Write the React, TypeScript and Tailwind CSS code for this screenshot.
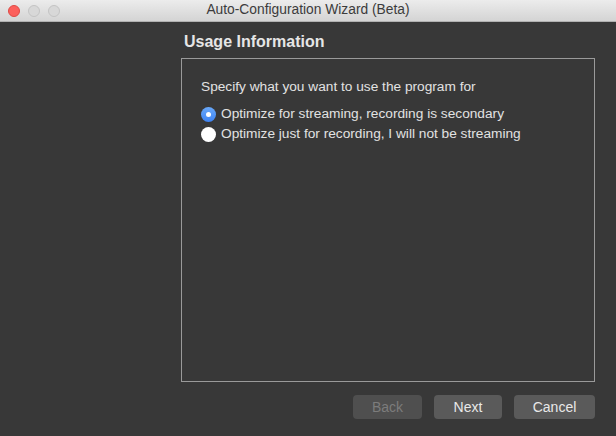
import React, { useState } from 'react';

const font = { fontFamily: '"Liberation Sans", Arial, sans-serif' };

const App: React.FC = () => {
  const [mode, setMode] = useState<'stream' | 'record'>('stream');

  const options = [
    { key: 'stream' as const, label: 'Optimize for streaming, recording is secondary' },
    { key: 'record' as const, label: 'Optimize just for recording, I will not be streaming' },
  ];

  return (
    <div className="w-[616px] h-[436px] flex flex-col bg-[#383838] overflow-hidden" style={font}>
      {/* barre de titre */}
      <div className="h-[22px] shrink-0 flex items-center relative bg-gradient-to-b from-[#ececec] to-[#d4d4d4] border-b border-[#b1b1b1]">
        <div className="flex items-center gap-[8px] pl-[8px]">
          <span className="w-[12px] h-[12px] rounded-full bg-[#fc605c] border border-[#de4a45]" />
          <span className="w-[12px] h-[12px] rounded-full bg-[#d8d8d8] border border-[#c4c4c4]" />
          <span className="w-[12px] h-[12px] rounded-full bg-[#d8d8d8] border border-[#c4c4c4]" />
        </div>
        <div className="flex-1 text-center text-[13.8px] text-[#3c3c3c] pr-[68px] pl-[8px]">
          Auto-Configuration Wizard (Beta)
        </div>
      </div>

      {/* contenu */}
      <div className="flex-1 flex flex-col pl-[181px] pr-[21px] pt-[10px]">
        <h2 className="text-[16px] font-bold text-[#e6e6e6] pl-[3px] leading-[20px]">Usage Information</h2>
        <div className="mt-[6px] h-[324px] border border-[#9a9a9a] px-[19px] pt-[19px]">
          <p className="text-[13.7px] text-[#e2e2e2] leading-[18px]">Specify what you want to use the program for</p>
          <div className="mt-[9px] flex flex-col gap-[2px]">
            {options.map((o) => (
              <label key={o.key} className="flex items-center gap-[5px] cursor-pointer h-[18px]" onClick={() => setMode(o.key)}>
                {mode === o.key ? (
                  <span className="w-[15px] h-[15px] rounded-full bg-gradient-to-b from-[#69a8f9] to-[#3e83f3] flex items-center justify-center">
                    <span className="w-[5px] h-[5px] rounded-full bg-white" />
                  </span>
                ) : (
                  <span className="w-[15px] h-[15px] rounded-full bg-white" />
                )}
                <span className="text-[13.7px] text-[#e2e2e2]">{o.label}</span>
              </label>
            ))}
          </div>
        </div>

        <div className="mt-[13px] flex justify-end gap-[12px]">
          <button className="w-[69px] h-[24px] rounded-[4px] bg-[#4f4f4f] text-[14px] text-[#7c7c7c]" disabled>
            Back
          </button>
          <button className="w-[68px] h-[24px] rounded-[4px] bg-[#5a5a5a] text-[14px] text-[#e8e8e8]">
            Next
          </button>
          <button className="w-[81px] h-[24px] rounded-[4px] bg-[#5a5a5a] text-[14px] text-[#e8e8e8]">
            Cancel
          </button>
        </div>
      </div>
    </div>
  );
};

export default App;
